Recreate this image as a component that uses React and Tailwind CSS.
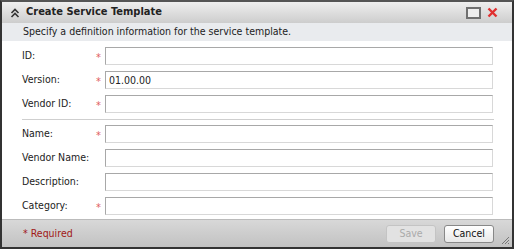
import React from 'react';

const Row = ({ label, required, value }) => (
  <div className="flex items-center h-[24px]">
    <div className="w-[75px] text-[10.5px] text-[#222]">{label}</div>
    <div className="w-[9px] h-[18px] flex items-center text-[11px] text-[#e06060] leading-none">
      <span className="ml-[-1px] mt-[3px]">{required ? '*' : ''}</span>
    </div>
    <input
      readOnly
      value={value || ''}
      className="ml-[-1px] w-[388px] h-[18px] border border-[#a8a8a8] border-r-[#d8d8d8] border-b-[#d8d8d8] bg-white px-[3px] text-[10.5px] text-[#222] outline-none"
      style={{ fontFamily: 'inherit' }}
    />
  </div>
);

export default function App() {
  return (
    <div className="w-[515px] h-[252px] bg-white" style={{ fontFamily: '"DejaVu Sans Condensed", "Liberation Sans", sans-serif' }}>
      <div className="w-[514px] h-[249px] border-2 border-[#333] border-t-[#555] flex flex-col">
        <div className="h-[21px] flex items-center bg-gradient-to-b from-[#efefef] to-[#cdcdcd] pl-[8px] pr-[14px]">
          <svg width="10" height="10" viewBox="0 0 10 10" className="mr-[6px]">
            <path d="M1.5 5 L5 1.5 L8.5 5 M1.5 9 L5 5.5 L8.5 9" stroke="#333" strokeWidth="1.6" fill="none" />
          </svg>
          <div className="text-[11px] font-bold text-[#222]">Create Service Template</div>
          <div className="ml-auto flex items-center gap-[6px]">
            <div className="w-[15px] h-[12px] border-2 border-[#707070] bg-[#eeeeee]" />
            <svg width="11" height="11" viewBox="0 0 11 11">
              <path d="M1.5 1.5 L9.5 9.5 M9.5 1.5 L1.5 9.5" stroke="#e03030" strokeWidth="2.4" />
            </svg>
          </div>
        </div>
        <div className="h-[18px] flex items-center bg-[#e9ebee] pl-[21px] text-[10.5px] text-[#222]">
          Specify a definition information for the service template.
        </div>
        <div className="flex-1 bg-white pl-[20px] pt-[3px]">
          <Row label="ID:" required />
          <Row label="Version:" required value="01.00.00" />
          <Row label="Vendor ID:" required />
          <div className="w-[472px] h-[1px] bg-[#cfcfcf] mt-[3px] mb-[2px]" />
          <Row label="Name:" required />
          <Row label="Vendor Name:" />
          <Row label="Description:" />
          <Row label="Category:" required />
        </div>
        <div className="relative h-[28px] flex items-center bg-gradient-to-b from-[#d8d8d8] to-[#c2c2c2] border-t border-[#bbb] pl-[21px] pr-[18px]">
          <div className="text-[10.5px] text-[#a01818]">* Required</div>
          <div className="ml-auto flex gap-[8px]">
            <button className="w-[50px] h-[18px] rounded-[3px] border border-[#c4c4c4] bg-[#e2e2e2] text-[10.5px] text-[#aaa]">Save</button>
            <button className="w-[50px] h-[18px] rounded-[3px] border border-[#888] bg-gradient-to-b from-white to-[#e8e8e8] text-[10.5px] text-[#111]">Cancel</button>
          </div>
          <svg width="9" height="9" viewBox="0 0 9 9" className="absolute right-[2px] bottom-[2px]">
            <path d="M8 1 L1 8 M8 4 L4 8 M8 7 L7 8" stroke="#777" strokeWidth="1" />
          </svg>
        </div>
      </div>
    </div>
  );
}
